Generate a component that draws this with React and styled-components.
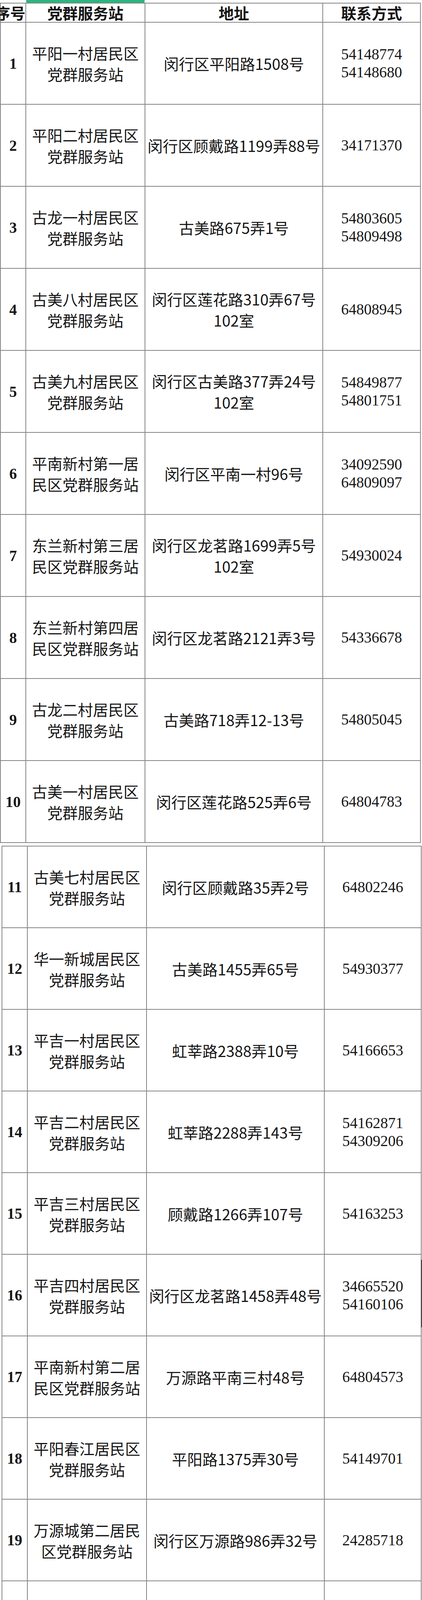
import React from "react"
import styled, { createGlobalStyle } from "styled-components"

const GlobalStyle = createGlobalStyle`
  html, body {
    margin: 0;
    padding: 0;
    background: #fff;
  }
`

const CJK = `"Noto Sans CJK SC", "Noto Sans", sans-serif`
const SERIF = `"Liberation Serif", "Noto Sans CJK SC", serif`

const stations = [
  ["平阳一村居民区", "党群服务站"],
  ["平阳二村居民区", "党群服务站"],
  ["古龙一村居民区", "党群服务站"],
  ["古美八村居民区", "党群服务站"],
  ["古美九村居民区", "党群服务站"],
  ["平南新村第一居", "民区党群服务站"],
  ["东兰新村第三居", "民区党群服务站"],
  ["东兰新村第四居", "民区党群服务站"],
  ["古龙二村居民区", "党群服务站"],
  ["古美一村居民区", "党群服务站"],
  ["古美七村居民区", "党群服务站"],
  ["华一新城居民区", "党群服务站"],
  ["平吉一村居民区", "党群服务站"],
  ["平吉二村居民区", "党群服务站"],
  ["平吉三村居民区", "党群服务站"],
  ["平吉四村居民区", "党群服务站"],
  ["平南新村第二居", "民区党群服务站"],
  ["平阳春江居民区", "党群服务站"],
  ["万源城第二居民", "区党群服务站"],
  ["万源城第三居民", "区党群服务站"],
]

const addresses = [
  ["闵行区平阳路1508号"],
  ["闵行区顾戴路1199弄88号"],
  ["古美路675弄1号"],
  ["闵行区莲花路310弄67号", "102室"],
  ["闵行区古美路377弄24号", "102室"],
  ["闵行区平南一村96号"],
  ["闵行区龙茗路1699弄5号", "102室"],
  ["闵行区龙茗路2121弄3号"],
  ["古美路718弄12-13号"],
  ["闵行区莲花路525弄6号"],
  ["闵行区顾戴路35弄2号"],
  ["古美路1455弄65号"],
  ["虹莘路2388弄10号"],
  ["虹莘路2288弄143号"],
  ["顾戴路1266弄107号"],
  ["闵行区龙茗路1458弄48号"],
  ["万源路平南三村48号"],
  ["平阳路1375弄30号"],
  ["闵行区万源路986弄32号"],
  ["莲花路755弄7号"],
]

const phones = [
  ["54148774", "54148680"],
  ["34171370"],
  ["54803605", "54809498"],
  ["64808945"],
  ["54849877", "54801751"],
  ["34092590", "64809097"],
  ["54930024"],
  ["54336678"],
  ["54805045"],
  ["64804783"],
  ["64802246"],
  ["54930377"],
  ["54166653"],
  ["54162871", "54309206"],
  ["54163253"],
  ["34665520", "54160106"],
  ["64804573"],
  ["54149701"],
  ["24285718"],
  ["34228319"],
]

const rows = stations.map((name, i) => ({
  no: i + 1,
  name,
  address: addresses[i],
  phone: phones[i],
}))

const Page = styled.div`
  position: relative;
  width: 1080px;
  height: 4264px;
  overflow: hidden;
  background: #fff;
  color: #161616;
`

const TopStrip = styled.div`
  display: grid;
  grid-template-columns: 67px 303px 1fr;
  height: 7px;
`

const GreenBar = styled.div`
  grid-column: 2;
  background: #2bb67f;
`

const Table = styled.div`
  display: grid;
  grid-template-columns: ${p => p.$cols};
  grid-template-rows: ${p => (p.$head ? "47px" : "none")};
  grid-auto-rows: ${p => p.$rowH}px;
  gap: 2px;
  padding: 2px;
  width: max-content;
  margin-left: ${p => p.$left}px;
  margin-top: ${p => p.$top}px;
  background: #858585;
`

const HeadCell = styled.div`
  display: flex;
  align-items: center;
  justify-content: ${p => (p.$right ? "flex-end" : "center")};
  background: #fff;
  font-family: ${CJK};
  font-weight: 700;
  font-size: 39px;
  line-height: 47px;
  white-space: nowrap;
`

const Cell = styled.div`
  display: flex;
  flex-direction: column;
  align-items: center;
  justify-content: center;
  background: #fff;
  text-align: center;
  white-space: nowrap;
`

const SeqCell = styled(Cell)`
  font-family: ${SERIF};
  font-weight: 700;
  font-size: 39px;
`

const TextCell = styled(Cell)`
  font-family: ${CJK};
  font-size: 39px;
  line-height: 54px;
`

const PhoneCell = styled(Cell)`
  font-family: ${SERIF};
  font-size: 39px;
  line-height: 46px;
`

const ScrollThumb = styled.div`
  position: absolute;
  right: 0;
  top: 3225px;
  width: 3px;
  height: 173px;
  background: #4d4d4d;
`

function Lines({ items }) {
  return items.map(t => <span key={t}>{t}</span>)
}

function Row({ row }) {
  return (
    <>
      <SeqCell>{row.no}</SeqCell>
      <TextCell>
        <Lines items={row.name} />
      </TextCell>
      <TextCell>
        <Lines items={row.address} />
      </TextCell>
      <PhoneCell>
        <Lines items={row.phone} />
      </PhoneCell>
    </>
  )
}

export default function App() {
  return (
    <Page>
      <GlobalStyle />
      <TopStrip>
        <GreenBar />
      </TopStrip>
      <Table $cols="63px 303px 453px 248px" $head $rowH={208} $left={0} $top={0}>
        <HeadCell $right>序号</HeadCell>
        <HeadCell>党群服务站</HeadCell>
        <HeadCell>地址</HeadCell>
        <HeadCell>联系方式</HeadCell>
        {rows.slice(0, 10).map(r => (
          <Row key={r.no} row={r} />
        ))}
      </Table>
      <Table $cols="63px 303px 453px 246px" $rowH={207} $left={4} $top={7}>
        {rows.slice(10).map(r => (
          <Row key={r.no} row={r} />
        ))}
      </Table>
      <ScrollThumb />
    </Page>
  )
}
